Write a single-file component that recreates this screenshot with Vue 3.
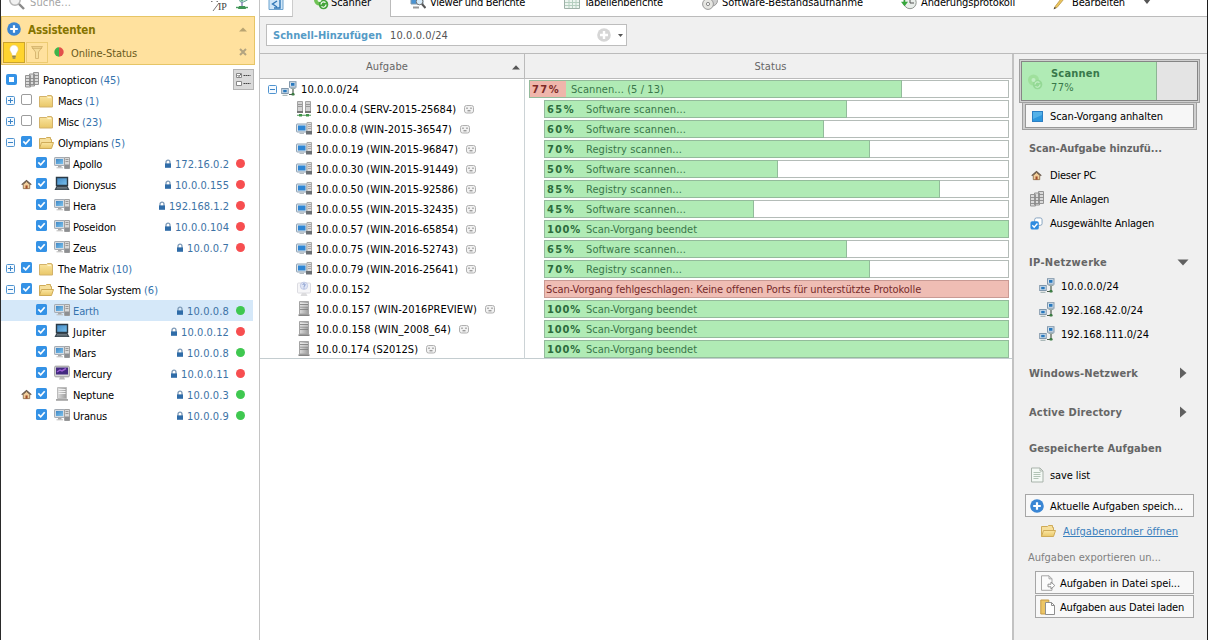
<script setup>
// Stretches or tightens a label so that it takes exactly the given width.
const vFit = {
  mounted(el, { value }) {
    const n = el.textContent.length
    const range = document.createRange()
    range.selectNodeContents(el)
    const natural = range.getBoundingClientRect().width
    el.style.letterSpacing = ((value - natural) / n).toFixed(3) + 'px'
  },
}

const tree = [
  { type: 'group', name: 'Macs', w: 24, count: '(1)', cw: 14, icon: 'folder' },
  { type: 'group', name: 'Misc', w: 21, count: '(23)', cw: 20, icon: 'folder' },
  { type: 'group', name: 'Olympians', w: 50, count: '(5)', cw: 14, icon: 'open', open: true, on: true },
  { name: 'Apollo', w: 29, icon: 'pc', ip: '172.16.0.2', iw: 54, state: 'red' },
  { name: 'Dionysus', w: 43, icon: 'laptop', ip: '10.0.0.155', iw: 54, state: 'red', home: true },
  { name: 'Hera', w: 23, icon: 'pc', ip: '192.168.1.2', iw: 60, state: 'red' },
  { name: 'Poseidon', w: 43, icon: 'pc', ip: '10.0.0.104', iw: 54, state: 'red' },
  { name: 'Zeus', w: 23, icon: 'pc', ip: '10.0.0.7', iw: 42, state: 'red' },
  { type: 'group', name: 'The Matrix', w: 51, count: '(10)', cw: 20, icon: 'folder', on: true },
  { type: 'group', name: 'The Solar System', w: 83, count: '(6)', cw: 14, icon: 'open', open: true, on: true },
  { name: 'Earth', w: 26, icon: 'pc', ip: '10.0.0.8', iw: 42, state: 'green', sel: true },
  { name: 'Jupiter', w: 33, icon: 'laptop', ip: '10.0.0.12', iw: 48, state: 'red' },
  { name: 'Mars', w: 23, icon: 'pc', ip: '10.0.0.8', iw: 42, state: 'green' },
  { name: 'Mercury', w: 39, icon: 'mac', ip: '10.0.0.11', iw: 48, state: 'red' },
  { name: 'Neptune', w: 41, icon: 'server', ip: '10.0.0.3', iw: 42, state: 'green', home: true },
  { name: 'Uranus', w: 34, icon: 'pc', ip: '10.0.0.9', iw: 42, state: 'green' },
]

const sw = ['Software scannen...', 100]
const reg = ['Registry scannen...', 96]
const done = ['Scan-Vorgang beendet', 111]
const tasks = [
  { name: '10.0.0.4 (SERV-2015-25684)', w: 140, icon: 'netserver', pct: 65, st: sw },
  { name: '10.0.0.8 (WIN-2015-36547)', w: 136, icon: 'pc2', pct: 60, st: sw },
  { name: '10.0.0.19 (WIN-2015-96847)', w: 142, icon: 'pc2', pct: 70, st: reg },
  { name: '10.0.0.30 (WIN-2015-91449)', w: 142, icon: 'pc2', pct: 50, st: sw },
  { name: '10.0.0.50 (WIN-2015-92586)', w: 142, icon: 'pc2', pct: 85, st: reg },
  { name: '10.0.0.55 (WIN-2015-32435)', w: 142, icon: 'pc2', pct: 45, st: sw },
  { name: '10.0.0.57 (WIN-2016-65854)', w: 142, icon: 'pc2', pct: 100, st: done },
  { name: '10.0.0.75 (WIN-2016-52743)', w: 142, icon: 'pc2', pct: 65, st: sw },
  { name: '10.0.0.79 (WIN-2016-25641)', w: 142, icon: 'pc2', pct: 70, st: reg },
  { name: '10.0.0.152', w: 54, icon: 'unknown', fail: true },
  { name: '10.0.0.157 (WIN-2016PREVIEW)', w: 161, icon: 'rack', pct: 100, st: done },
  { name: '10.0.0.158 (WIN_2008_64)', w: 135, icon: 'rack', pct: 100, st: done },
  { name: '10.0.0.174 (S2012S)', w: 102, icon: 'rack', pct: 100, st: done },
]
const nets = [['10.0.0.0/24', 58], ['192.168.42.0/24', 82], ['192.168.111.0/24', 88]]
const adds = [['Dieser PC', 46, 'home'], ['Alle Anlagen', 59, 'cabinet'], ['Ausgewählte Anlagen', 104, 'selected']]
</script>

<template>
  <div class="window">
    <svg class="defs" width="0" height="0">
      <defs>
        <linearGradient id="gFold" x1="0" y1="0" x2="0" y2="1"><stop offset="0" stop-color="#fbe6a2" /><stop offset="1" stop-color="#e9c768" /></linearGradient>
        <linearGradient id="gMetal" x1="0" y1="0" x2="1" y2="0"><stop offset="0" stop-color="#dcdcdc" /><stop offset="1" stop-color="#9c9c9c" /></linearGradient>
        <linearGradient id="gScr" x1="0" y1="0" x2="1" y2="1"><stop offset="0" stop-color="#3f86c4" /><stop offset="1" stop-color="#7cc3ee" /></linearGradient>
      </defs>
      <symbol id="plus" viewBox="0 0 14 14"><circle cx="7" cy="7" r="6.8" fill="#3a86d4" /><path d="M7 3.200v7.600M3.200 7h7.600" stroke="#fff" stroke-width="2.200" /></symbol>
      <symbol id="plusgray" viewBox="0 0 14 14"><circle cx="7" cy="7" r="6.800" fill="#d6d6d6" /><path d="M7 3v8M3 7h8" stroke="#fff" stroke-width="2.400" /></symbol>
      <symbol id="folder" viewBox="0 0 16 16"><path d="M1.500 3.500h7l1-1h4v1h1v10.500h-13z" fill="url(#gFold)" stroke="#d3b26a" /><path d="M9.500 4.600h3.500" stroke="#fff6d4" /></symbol>
      <symbol id="open" viewBox="0 0 16 16"><path d="M1.500 13.500v-10h6l1-1h4v2h1v3" fill="#f6df9c" stroke="#cfab58" /><path d="M3.500 7.500h12l-2 6h-12z" fill="url(#gFold)" stroke="#cfab58" /></symbol>
      <symbol id="pc" viewBox="0 0 16 16"><rect x=".5" y="2.500" width="10" height="8" rx=".6" fill="#d4dbe2" stroke="#a4abb4" /><rect x="2" y="4" width="7" height="5" fill="url(#gScr)" /><path d="M4 11h3.500v1.500H4z" fill="#aaa" /><path d="M2.500 12.800h6.500" stroke="#bbb" /><path d="M10.500 2.500h5v11h-5z" fill="#d9d9d9" stroke="#a2a2a2" /><path d="M11.500 4.500h3M11.500 6.500h3" stroke="#999" /><rect x="11" y="9.500" width="4.500" height="4" fill="#8d8f92" /></symbol>
      <symbol id="pc2" viewBox="0 0 16 16"><rect x=".5" y="3" width="10.500" height="8" rx=".6" fill="#dbe6ee" stroke="#8fa3b5" /><rect x="2" y="4.500" width="7.500" height="5" fill="#2f86d4" /><path d="M3.500 11.500h4.500v1.500H3.500z" fill="#b4bcc4" /><path d="M11 1.500h4.500v9H11z" fill="#dcdcdc" stroke="#ababab" /><path d="M12 3.500h3M12 5.500h3M12 7.500h3" stroke="#999" stroke-width=".8" /><rect x="10" y="10" width="6" height="3.500" fill="#6a6f74" /></symbol>
      <symbol id="laptop" viewBox="0 0 16 16"><path d="M2.500 1.500h11v8h-11z" fill="url(#gScr)" stroke="#2b3a46" stroke-width="1.400" /><path d="M2.500 10h11l2 4h-15z" fill="#3a464f" /><path d="M3 11.500h10M2.500 12.800h11" stroke="#8b979f" stroke-width=".6" /></symbol>
      <symbol id="mac" viewBox="0 0 16 16"><rect x=".7" y="1.200" width="14.600" height="10.600" rx="1" fill="#d9d9d9" stroke="#999" /><rect x="2" y="2.500" width="12" height="7" fill="#432a80" /><path d="M3 7l3-2 2 1 4-2.500" stroke="#b36be8" stroke-width="1.500" fill="none" opacity=".8" /><path d="M6 12h4l1 2.500H5z" fill="#b9b9b9" /></symbol>
      <symbol id="server" viewBox="0 0 16 16"><path d="M3.500 1.500h9v11h-9z" fill="url(#gMetal)" stroke="#bcbcbc" /><path d="M4.500 3.500h7M4.500 5.500h7M4.500 7.500h7" stroke="#f0f0f0" /><path d="M2 13h12v1.800H2z" fill="#a4a4a4" /></symbol>
      <symbol id="rack" viewBox="0 0 16 16"><path d="M3.500 .500h9V13h-9z" fill="url(#gMetal)" stroke="#a4a4a4" /><path d="M4 3.500h8M4 6h8M4 8.500h8" stroke="#7c7c7c" stroke-width=".8" /><path d="M4 2.500h8M4 5h8" stroke="#eee" stroke-width=".7" /><path d="M2.500 13.300h11V15h-11z" fill="#858585" /></symbol>
      <symbol id="netserver" viewBox="0 0 16 16"><path d="M1.500 .500h5v10h-5zM9.500 .500h5v10h-5z" fill="#d2d2d2" stroke="#a2a2a2" /><path d="M2 3.500h4M2 5.500h4M10 3.500h4M10 5.500h4" stroke="#888" stroke-width=".8" /><path d="M1 10h6v2H1zM9 10h6v2H9z" fill="#777" /><path d="M1 14.300h14" stroke="#6ba874" stroke-width="1.200" /><path d="M3 13h3v2.500H3zM10 13h3v2.500h-3z" fill="#3f9449" /></symbol>
      <symbol id="unknown" viewBox="0 0 16 16"><rect x="1.500" y="2" width="13" height="10" rx="1" fill="#f6f6f8" stroke="#dcdce2" /><path d="M6 12h4l1.500 3h-7z" fill="#dcdcde" /><circle cx="8" cy="4.800" r="3.700" fill="#dfe5f5" stroke="#b4bfdf" stroke-width=".7" /><path d="M6.800 4c0-1.600 2.500-1.500 2.300 0 0 .8-1.100.8-1.100 1.800M8 6.600v.9" stroke="#6b84c0" fill="none" stroke-width=".9" /></symbol>
      <symbol id="net" viewBox="0 0 16 16"><rect x="8.500" y=".7" width="6.500" height="5.500" fill="#d3e2ee" stroke="#8197ab" /><rect x="10" y="2" width="3.500" height="2.800" fill="#2878bd" /><path d="M9.500 7.500h5" stroke="#9aa" /><rect x=".7" y="7.500" width="6.500" height="5" fill="#d3e2ee" stroke="#8197ab" /><rect x="2.200" y="8.800" width="3.500" height="2.500" fill="#2878bd" /><path d="M1.500 14.300h5" stroke="#9aa" /><path d="M8 13.500h5.500M12 8v5.500" stroke="#4b5b4d" stroke-width="1.200" /><path d="M10.700 12h2.600v2.500h-2.600z" fill="#3c7d44" /></symbol>
      <symbol id="home" viewBox="0 0 12 12"><path d="M2.500 6v4.500h7V6L6 2.800z" fill="#f1cf9c" stroke="#8b6a44" stroke-width=".9" /><path d="M.8 6.300L6 1.700l5.200 4.600" fill="none" stroke="#6a5a4c" stroke-width="1.300" /><path d="M4.900 7h2.300v3.500H4.900z" fill="#a04d2d" /></symbol>
      <symbol id="lock" viewBox="0 0 8 10"><path d="M2 5V3.200a2 2 0 0 1 4 0V5" fill="none" stroke="#7f9bb8" stroke-width="1.300" /><rect x="1" y="4.400" width="6" height="4.400" fill="#2f6ca8" /></symbol>
      <symbol id="cabinet" viewBox="0 0 16 16"><path d="M9.500 .500h5v12h-5zM5.500 2h5v12h-5zM1.500 3.500h5v11.500h-5z" fill="#dadada" stroke="#949494" /><path d="M9.500 3.500h5M9.500 6.500h5M9.500 9.500h5M1.500 6.500h9M1.500 9.500h9M1.500 12.500h9" stroke="#8a8a8a" stroke-width=".9" /></symbol>
      <symbol id="selected" viewBox="0 0 14 14"><rect x="5" y="1" width="8" height="8" rx="2" fill="#fff" stroke="#7f9fbd" /><rect x=".5" y="4.500" width="9" height="9" rx="2" fill="#2d8be0" /><path d="M2.500 9l2 2 3.500-4" stroke="#fff" stroke-width="1.500" fill="none" /></symbol>
      <symbol id="doc" viewBox="0 0 16 16"><path d="M2.500 1H11l3 3v11H2.500z" fill="#f4f9f5" stroke="#a9b3ab" /><path d="M11 1v3h3" fill="none" stroke="#a9b3ab" /><path d="M4.500 5.500h7M4.500 7.500h7M4.500 9.500h7M4.500 11.500h5" stroke="#b2c4b6" /></symbol>
      <symbol id="docout" viewBox="0 0 16 16"><path d="M1.500 .800H9l3 3v11.500H1.500z" fill="#fbfbfb" stroke="#a6a6a6" /><path d="M9 .800v3h3" fill="none" stroke="#a6a6a6" /><path d="M8 9.200h3V7l3.800 3.500L11 14v-2.200H8z" fill="#fff" stroke="#919191" /></symbol>
      <symbol id="docin" viewBox="0 0 16 16"><path d="M.800 1h8v14h-8z" fill="#ecc565" stroke="#c79a45" /><path d="M5.500 3.500h6l3 3v9h-9z" fill="#fff" stroke="#8f8f8f" /><path d="M11.500 3.500v3h3" fill="none" stroke="#8f8f8f" /></symbol>
      <symbol id="cycle" viewBox="0 0 16 16"><circle cx="6.500" cy="6" r="5.500" fill="#6fc255" /><circle cx="10.500" cy="10.500" r="4.800" fill="#45a53a" /><circle cx="6.500" cy="6" r="2" fill="#f2faef" /><path d="M8 10.500a2.600 2.600 0 0 1 4.500-1.800M13 10.600a2.600 2.600 0 0 1-4.500 1.800" stroke="#fff" stroke-width="1.200" fill="none" /></symbol>
    </svg>

    <aside class="side">
      <div class="search">
        <svg class="glass" width="18" height="18" viewBox="0 0 18 18"><circle cx="7" cy="7" r="5.200" fill="#f1f1f1" stroke="#b4b4b4" stroke-width="1.500" /><path d="M11 11l5 5" stroke="#8a8a8a" stroke-width="2.400" /></svg>
        <span v-fit="41" class="ph">Suche...</span>
        <span class="slash"><svg width="16" height="14" viewBox="0 0 16 14"><path d="M1 1.500h1.500M6.500 1.500h1.500M3 11L9 3" stroke="#777" fill="none" /></svg><b>IP</b></span>
        <svg class="gnet" width="16" height="16" viewBox="0 0 16 16"><path d="M2.500 0h11v6l-4 2h-3z" fill="#c4e5d8" stroke="#6ea79b" /><path d="M5 4l3 2 3-2.500" stroke="#2f8a5c" stroke-width="1.500" fill="none" /><path d="M8 8v4" stroke="#559" /><path d="M2 13.500h12" stroke="#4b9d61" stroke-width="1.400" /><path d="M5 12h6l1 3H4z" fill="#3f9455" /></svg>
      </div>
      <section class="assist">
        <div class="arow">
          <svg width="14" height="14"><use href="#plus" /></svg>
          <b v-fit="67.5">Assistenten</b>
          <svg class="end" width="8" height="5"><path d="M0 4.500L4 .500l4 4z" fill="#b9a471" /></svg>
        </div>
        <div class="arow two">
          <span class="tool on"><svg width="14" height="18" viewBox="0 0 14 18"><path d="M7 2a4.300 4.300 0 0 1 4.300 4.300C11.300 9 9 9.500 9 12.500H5C5 9.500 2.700 9 2.700 6.300A4.300 4.300 0 0 1 7 2z" fill="#fff" stroke="#e5c76a" stroke-width=".6" /><path d="M5.200 13.500h3.600M5.600 15.200h2.800" stroke="#8a8260" stroke-width="1.300" /></svg></span>
          <span class="tool"><svg width="14" height="18" viewBox="0 0 14 18"><path d="M1.500 3.500h11L8.500 9v6.500h-3V9z" fill="#f6dc98" stroke="#d9b872" /><path d="M2 5.200h10" stroke="#d0ad66" /></svg></span>
          <svg class="half" width="10" height="10"><path d="M5 .300a4.700 4.700 0 0 0 0 9.400z" fill="#3eb44a" /><path d="M5 .300a4.700 4.700 0 0 1 0 9.400z" fill="#e2504b" /></svg>
          <span v-fit="66" class="os">Online-Status</span>
          <svg class="end" width="8" height="8"><path d="M1 1l6 6M7 1L1 7" stroke="#b3a480" stroke-width="2" /></svg>
        </div>
      </section>
      <div class="tree">
        <div class="row root">
          <svg class="rootbox" width="11" height="11"><rect width="11" height="11" rx="2" fill="#3492e6" /><rect x="3" y="3" width="5" height="5" fill="#fff" /></svg>
          <svg class="cab" width="16" height="16"><use href="#cabinet" /></svg>
          <span v-fit="54" class="nm">Panopticon</span><span v-fit="20" class="cnt">(45)</span>
          <span class="mode"><svg width="19" height="19" viewBox="0 0 19 19"><path d="M2.500 3.500h5v4h-5zM2.500 11.500h5v4h-5z" fill="#fff" stroke="#888" /><path d="M3.500 5l1.500 1.500 2-2.500" stroke="#555" fill="none" /><path d="M9.500 5.500h7M9.500 13.500h7" stroke="#444" stroke-width="1.200" stroke-dasharray="1.500 .5" /></svg></span>
        </div>
        <div v-for="r in tree" :key="r.name" class="row" :class="{ sel: r.sel, leaf: r.type !== 'group' }">
          <template v-if="r.type === 'group'">
            <svg class="exp" width="9" height="9"><rect x=".5" y=".5" width="8" height="8" rx="1" fill="#f5faff" stroke="#4f93cf" /><path :d="r.open ? 'M2 4.500h5' : 'M2 4.500h5M4.500 2v5'" stroke="#3c84c6" /></svg>
          </template>
          <span v-else class="homebox"><svg v-if="r.home" width="11" height="11"><use href="#home" /></svg></span>
          <svg class="chk" width="11" height="11"><template v-if="r.on || r.type !== 'group'"><rect width="11" height="11" rx="1.500" fill="#3492e6" /><path d="M2.300 5.300l2.400 2.500 4-4.600" fill="none" stroke="#fff" stroke-width="1.700" /></template><rect v-else x=".5" y=".5" width="10" height="10" rx="1.500" fill="#fff" stroke="#9c9c9c" /></svg>
          <svg class="ico" width="16" height="16"><use :href="'#' + r.icon" /></svg>
          <span v-fit="r.w" class="nm">{{ r.name }}</span>
          <span v-if="r.count" v-fit="r.cw" class="cnt">{{ r.count }}</span>
          <span v-if="r.ip" class="addr"><svg width="8" height="10"><use href="#lock" /></svg><span v-fit="r.iw" class="nip">{{ r.ip }}</span><i :class="r.state"></i></span>
        </div>
      </div>
    </aside>

    <div class="body">
      <nav class="tabs">
        <span class="tab back"><svg width="16" height="16" viewBox="0 0 16 16"><path d="M1 0h14v14.500H1z" fill="#cfe6f8" stroke="#6da3cf" /><path d="M12 4v9H6M9 6L4.500 9 9 12" fill="none" stroke="#2f76b5" stroke-width="1.400" /></svg></span>
        <span class="tab active"><svg width="16" height="16"><use href="#cycle" /></svg><span v-fit="40">Scanner</span></span>
        <div class="rest">
          <svg class="t1" width="16" height="16" viewBox="0 0 16 16"><path d="M1 2h12v8H1z" fill="#4a94d4" stroke="#8099ad" /><path d="M3 13.500h6" stroke="#999" stroke-width="2" /><circle cx="9.500" cy="7.500" r="3.300" fill="#d8ecfa" stroke="#777" /><path d="M12 10l3.500 4" stroke="#555" stroke-width="2" /></svg><span v-fit="95">Viewer und Berichte</span>
          <svg class="t2" width="16" height="16" viewBox="0 0 16 16"><path d="M.5 1.500h15v13H.5z" fill="#edf5f0" stroke="#9fb1a8" /><path d="M1 5h14M1 8.500h14M1 11.500h14M5 2v12M8.500 2v12M12 2v12" stroke="#b5cfc0" /></svg><span v-fit="79">Tabellenberichte</span>
          <svg class="t3" width="16" height="16" viewBox="0 0 16 16"><circle cx="10" cy="6.500" r="5.500" fill="#cfcfcf" stroke="#999" /><circle cx="6" cy="10" r="5.400" fill="#e6e6e2" stroke="#999" /><circle cx="6" cy="10" r="1.600" fill="#fff" stroke="#888" /></svg><span v-fit="141">Software-Bestandsaufnahme</span>
          <svg class="t4" width="16" height="16" viewBox="0 0 16 16"><circle cx="9" cy="8.500" r="6.200" fill="#e9eeea" stroke="#909690" /><path d="M9 4v5h4" stroke="#555" fill="none" /><path d="M3.500 4v6M1.500 8.500l2 2.500 2-2.500z" stroke="#36a63c" fill="#36a63c" stroke-width="1.500" /></svg><span v-fit="94">Änderungsprotokoll</span>
          <svg class="t5" width="14" height="16" viewBox="0 0 14 16"><path d="M1 14.500L2.500 12 11 1l2 1.500L4 13.500z" fill="#ecc75c" stroke="#b9944a" stroke-width=".8" /><path d="M.7 15.500l2.300-1.500-1.300-1z" fill="#333" /></svg><span v-fit="53">Bearbeiten</span>
          <svg class="t6" width="8" height="5"><path d="M0 0h8L4 5z" fill="#555" /></svg>
        </div>
      </nav>
      <div class="quick">
        <div class="field">
          <b v-fit="109">Schnell-Hinzufügen</b><span v-fit="58">10.0.0.0/24</span>
          <svg class="end" width="14" height="14"><use href="#plusgray" /></svg>
          <svg class="dd" width="5" height="3"><path d="M0 0h5L2.500 3z" fill="#555" /></svg>
        </div>
      </div>
      <div class="lower">
        <main class="grid">
          <header class="head">
            <div class="c1"><span v-fit="42">Aufgabe</span><svg width="8" height="5"><path d="M0 4.500L4 .300l4 4.200z" fill="#555" /></svg></div>
            <div class="c2"><span v-fit="32">Status</span></div>
          </header>
          <div class="trow">
            <div class="name top">
              <svg class="exp" width="9" height="9"><rect x=".5" y=".5" width="8" height="8" rx="1" fill="#f5faff" stroke="#4f93cf" /><path d="M2 4.500h5" stroke="#3c84c6" /></svg>
              <svg class="ico" width="16" height="16"><use href="#net" /></svg><span v-fit="58">10.0.0.0/24</span>
            </div>
            <div class="cell"><div class="bar first"><div class="fill"></div><b v-fit="28">77%</b><span v-fit="93">Scannen... (5 / 13)</span></div></div>
          </div>
          <div v-for="t in tasks" :key="t.name" class="trow">
            <div class="name">
              <svg class="ico" width="16" height="16"><use :href="'#' + t.icon" /></svg><span v-fit="t.w">{{ t.name }}</span>
              <svg v-if="!t.fail" class="face" width="10" height="9" viewBox="0 0 10 9"><rect x=".5" y=".5" width="9" height="7.500" rx="2" fill="#f2f2f2" stroke="#b0b0b0" /><path d="M3 2.500v1.500M7 2.500v1.500M3.500 5.800h3" stroke="#777" fill="none" /></svg>
            </div>
            <div class="cell sub">
              <div v-if="t.fail" class="bar fail"><span v-fit="375">Scan-Vorgang fehlgeschlagen: Keine offenen Ports für unterstützte Protokolle</span></div>
              <div v-else class="bar"><div class="fill" :style="{ width: `calc(${t.pct}% + 2px)` }"></div><b v-fit="t.pct === 100 ? 34 : 28">{{ t.pct }}%</b><span v-fit="t.st[1]">{{ t.st[0] }}</span></div>
            </div>
          </div>
          <div class="line"></div>
        </main>

        <aside class="panel">
          <div class="progress">
            <div class="pin"><div class="pfill"><svg width="16" height="16"><use href="#cycle" /></svg><div><b v-fit="49">Scannen</b><span v-fit="23">77%</span></div></div></div>
          </div>
          <div class="stopframe"><div class="stop"><svg width="11" height="11"><rect width="11" height="11" fill="#2c7fc4" /><rect x="1" y="1" width="9" height="9" fill="#55b1e8" /><path d="M1 8l9-4v6H1z" fill="#2e97dd" /></svg><span v-fit="113">Scan-Vorgang anhalten</span></div></div>
          <h3 class="h1"><span v-fit="133">Scan-Aufgabe hinzufü...</span></h3>
          <ul class="adds"><li v-for="a in adds" :key="a[0]"><span class="slot"><svg v-if="a[2] === 'home'" width="11" height="11"><use href="#home" /></svg><svg v-else-if="a[2] === 'selected'" width="13" height="13"><use href="#selected" /></svg><svg v-else width="16" height="16"><use href="#cabinet" /></svg></span><span v-fit="a[1]" class="lbl">{{ a[0] }}</span></li></ul>
          <h3 class="h2"><span v-fit="78">IP-Netzwerke</span><svg width="12" height="7"><path d="M.5 .500h11L6 6.500z" fill="#606060" /></svg></h3>
          <ul class="nets"><li v-for="n in nets" :key="n[0]"><svg width="16" height="16"><use href="#net" /></svg><span v-fit="n[1]" class="lbl">{{ n[0] }}</span></li></ul>
          <h3 class="h2"><span v-fit="109">Windows-Netzwerk</span><svg width="12" height="12"><path d="M3 .500L9.500 6 3 11.500z" fill="#606060" /></svg></h3>
          <h3 class="h3"><span v-fit="93">Active Directory</span><svg width="12" height="12"><path d="M3 .500L9.500 6 3 11.500z" fill="#606060" /></svg></h3>
          <h3 class="h2"><span v-fit="133">Gespeicherte Aufgaben</span></h3>
          <ul class="adds"><li><span class="slot"><svg width="16" height="16"><use href="#doc" /></svg></span><span v-fit="40" class="lbl">save list</span></li></ul>
          <div class="btn save"><svg width="14" height="14"><use href="#plus" /></svg><span v-fit="133">Aktuelle Aufgaben speich...</span></div>
          <div class="openlink"><svg width="16" height="16"><use href="#open" /></svg><a v-fit="115">Aufgabenordner öffnen</a></div>
          <div class="export"><span v-fit="133">Aufgaben exportieren un...</span></div>
          <div class="btn file"><svg width="16" height="16"><use href="#docout" /></svg><span v-fit="120">Aufgaben in Datei spei...</span></div>
          <div class="btn file second"><svg width="16" height="16"><use href="#docin" /></svg><span v-fit="124">Aufgaben aus Datei laden</span></div>
        </aside>
      </div>
    </div>
  </div>
</template>

<style>
body { margin: 0; background: #fff; overflow: hidden; }
</style>

<style scoped>
.window { display: flex; width: 1208px; height: 640px; box-sizing: border-box; border-left: 1px solid #2a2a2a; border-right: 1px solid #1c1c1c; background: #fff; color: #000; font: 11px/14px "DejaVu Sans Condensed", "DejaVu Sans", sans-serif; font-stretch: condensed; overflow: hidden; }
.window * { box-sizing: border-box; }
.defs { position: absolute; }
span, b, a { white-space: nowrap; flex: none; }
svg { flex: none; display: block; }
.side { width: 259px; flex: none; border-right: 1px solid #c4c4c4; }
.search { height: 16px; display: flex; align-items: flex-start; overflow: hidden; }
.glass { margin: -7px 0 0 7px; }
.ph { margin: -4px 0 0 4px; color: #a4a4a4; }
.slash { display: flex; margin-left: 139px; color: #444; }
.slash svg { margin-right: -8px; }
.slash b { font: 10px/14px "Liberation Serif", serif; }
.gnet { margin: -6px 0 0 7px; }
.assist { width: 254px; height: 49px; border: 1px solid #e6c566; background: #ffe19e; padding-top: 1px; }
.arow { display: flex; align-items: center; height: 22px; padding: 0 7px 0 5px; color: #857400; }
.arow b { margin-left: 7px; padding-top: 1px; font-size: 11.5px; }
.end { margin-left: auto; }
.arow.two { padding-left: 1px; height: 24px; color: #6a5a1c; }
.tool { width: 22px; height: 21px; display: flex; justify-content: center; align-items: center; border: 1px solid #eccb73; margin-right: 1px; }
.tool.on { background: #ffd42e; border-color: #caa32c; }
.half { margin-left: 5px; }
.os { margin-left: 7px; padding-top: 3px; }
.tree { padding-top: 4px; }
.row { display: flex; align-items: center; height: 21px; width: 252px; padding-left: 5px; }
.nm, .cnt, .nip, .lbl, .btn span, .stop span, h3 span, .export span, .c1 span, .c2 span, .name span, .openlink a { padding-top: 2px; }
.row.sel { background: #d5e8f9; }
.sel .nm, .cnt { color: #3573ae; }
.cnt { margin-left: 3px; }
.rootbox { margin: -1px 0 0 0; }
.cab { margin: 0 3px 0 7px; }
.mode { margin-left: auto; width: 21px; height: 21px; background: #dadada; border: 1px solid #b4b4b4; margin-right: -1px; }
.exp { margin: 0 6px 0 0; }
.chk { margin-top: -2px; }
.row .ico { margin: 0 4px 0 6px; }
.leaf .ico { margin: -1px 3px 0 7px; }
.homebox { width: 12px; height: 12px; margin: 0 3px 0 15px; }
.addr { margin-left: auto; display: flex; align-items: center; color: #3d73a6; margin-right: 8px; }
.addr svg { margin-right: 3px; }
.addr i { width: 9px; height: 9px; border-radius: 50%; margin: -1px 0 0 7px; }
.red { background: #f74e50; }
.green { background: #3fc850; }
.body { flex: 1; display: flex; flex-direction: column; background: #f0f0f0; min-width: 0; }
.tabs { height: 17px; display: flex; flex: none; }
.tab { display: flex; height: 17px; }
.back { width: 33px; background: #fff; border-bottom: 1px solid #bbb; border-right: 1px solid #ccc; padding-left: 8px; }
.back svg { margin-top: -5px; }
.active { width: 98px; padding-left: 20px; border-right: 1px solid #bbb; }
.active svg { margin-top: -6px; }
.active span { margin: -4px 0 0 2px; }
.rest { flex: 1; background: #fff; border-bottom: 1px solid #bbb; display: flex; overflow: hidden; }
.rest span { margin-top: -4px; }
.rest svg { margin-top: -6px; }
.t1 { margin-left: 19px; margin-right: 4px; }
.t2 { margin-left: 39px; margin-right: 4px; }
.t3 { margin-left: 39px; margin-right: 4px; }
.t4 { margin-left: 38px; margin-right: 4px; }
.t5 { margin-left: 38px; margin-right: 5px; }
.rest .t6 { margin: -1px 0 0 18px; }
.quick { height: 37px; flex: none; border-bottom: 1px solid #bbb; padding: 7px 0 0 6px; }
.field { width: 361px; height: 22px; border: 1px solid #bdbdbd; background: #fff; display: flex; align-items: center; padding: 0 3px 0 6px; color: #555; }
.field b { color: #559bc6; margin-right: 8px; }
.field b, .field span { padding-top: 1px; }
.dd { margin-left: 7px; }
.lower { flex: 1; display: flex; min-height: 0; }
.grid { width: 752px; flex: none; background: #fff; }
.head { display: flex; height: 25px; background: #f0f0f0; border-bottom: 1px solid #bbb; color: #666; }
.c1 { width: 265px; border-right: 1px solid #bbb; display: flex; align-items: center; justify-content: flex-end; padding-right: 4px; }
.c1 svg { margin-left: 104px; margin-top: 2px; }
.c2 { flex: 1; display: flex; align-items: center; justify-content: center; padding-left: 4px; }
.trow { display: flex; height: 20px; }
.name { width: 265px; border-right: 1px solid #ccd3d6; display: flex; align-items: center; padding-left: 36px; }
.name span { margin-left: 4px; }
.name.top { padding-left: 8px; }
.name.top .exp { margin-right: 4px; }
.face { margin-left: 8px; }
.cell { flex: 1; padding: 1px 3px 0 4px; }
.cell.sub { padding-left: 19px; }
.bar { position: relative; height: 18px; border: 1px solid #b4bcb8; display: flex; align-items: center; color: #39774a; background: #fff; }
.fill { position: absolute; left: -1px; top: -1px; bottom: -1px; background: #b0ebb5; border: 1px solid #93bb9b; }
.bar b { position: relative; width: 36px; margin-left: 2px; color: #2c6c3c; }
.bar span { position: relative; margin-left: 3px; }
.first .fill { width: 373px; background: linear-gradient(90deg, #efb6ab 36px, #b0ebb5 36px); }
.first b { color: #7c2a26; }
.fail { background: #efbdb4; border-color: #c99a94; color: #762b2b; }
.fail span { margin-left: 1px; }
.bar b, .bar span { padding-top: 1px; }
.line { height: 1px; background: #c4cdd0; margin-top: -1px; }
.panel { flex: 1; border-left: 2px solid #c2c2c2; padding: 5px 0 0 5px; display: flex; flex-direction: column; align-items: flex-start; background: #f0f0f0; color: #000; }
.progress { width: 181px; height: 44px; border: 1px solid #a0a0a0; background: #cfcfcf; padding: 1px; flex: none; }
.pin { height: 100%; border: 1px solid #858585; background: #e4e4e4; }
.pfill { width: 135px; height: 100%; background: #b0ebb5; border-right: 1px solid #8db594; display: flex; padding: 5px 0 0 5px; color: #38784a; }
.pfill svg { opacity: .25; margin: 7px 8px 0 0; }
.pfill div { display: flex; flex-direction: column; align-items: flex-start; }
.stopframe { width: 175px; height: 27px; margin-left: 3px; border: 1px solid #a0a0a0; border-top: 0; background: #cfcfcf; padding: 1px 2px 2px; flex: none; }
.stop { height: 24px; background: #f7f7f7; border: 1px solid #989898; display: flex; align-items: center; padding-left: 6px; }
.stop span { margin-left: 7px; }
h3 { margin: 0 0 0 10px; width: 160px; height: 18px; flex: none; display: flex; align-items: center; justify-content: space-between; font: inherit; font-weight: bold; color: #666; }
.h1 { margin-top: 9px; }
.h2 { margin-top: 18px; }
.h3 { margin-top: 21px; }
ul { list-style: none; margin: 6px 0 0; padding: 0; flex: none; }
li { display: flex; align-items: center; height: 24px; }
.adds { padding-left: 9px; }
.slot { width: 17px; display: flex; justify-content: center; margin-right: 5px; }
.nets { margin-top: 3px; padding-left: 20px; }
.nets svg { margin-right: 6px; }
.btn { height: 23px; flex: none; background: #f8f8f8; border: 1px solid #a6a6a6; display: flex; align-items: center; }
.save { width: 169px; margin: 7px 0 0 6px; padding-left: 4px; }
.save span { margin-left: 6px; }
.openlink { margin: 2px 0 0 21px; height: 24px; display: flex; align-items: center; flex: none; }
.openlink a { margin-left: 7px; color: #3a7fbd; text-decoration: underline; }
.export { margin: 5px 0 5px 9px; height: 18px; display: flex; align-items: center; color: #808080; flex: none; }
.file { width: 159px; margin-left: 16px; padding-left: 4px; }
.file span { margin-left: 4px; }
.second { margin-top: 1px; }
</style>
